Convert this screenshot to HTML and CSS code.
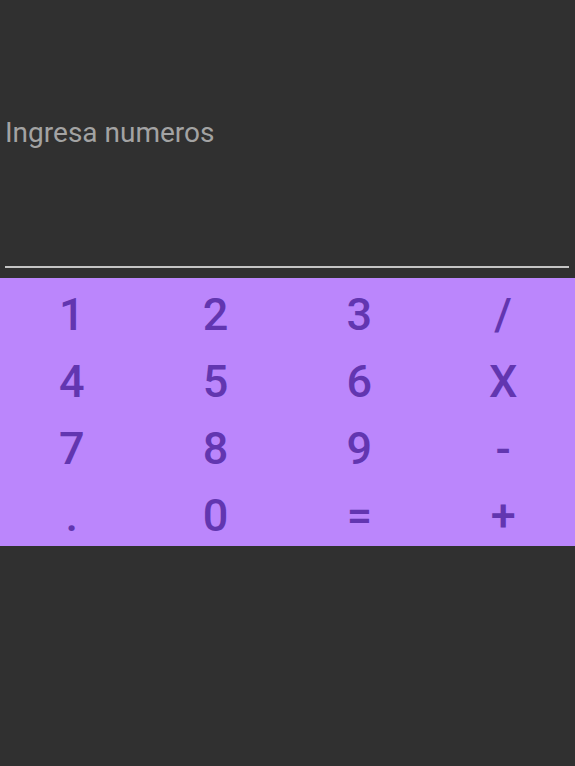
FILE: index.html
```html
<!DOCTYPE html>
<html lang="es">
<head>
<meta charset="utf-8">
<title>Calculadora</title>
<link rel="stylesheet" href="styles.css">
</head>
<body>
<main class="app">
  <section class="display">
    <div class="hint">Ingresa numeros</div>
    <div class="underline"></div>
  </section>
  <section class="keypad">
    <button class="key">1</button>
    <button class="key">2</button>
    <button class="key">3</button>
    <button class="key">/</button>
    <button class="key">4</button>
    <button class="key">5</button>
    <button class="key">6</button>
    <button class="key">X</button>
    <button class="key">7</button>
    <button class="key">8</button>
    <button class="key">9</button>
    <button class="key">-</button>
    <button class="key">.</button>
    <button class="key">0</button>
    <button class="key">=</button>
    <button class="key">+</button>
  </section>
</main>
</body>
</html>
```

FILE: styles.css
```css
html, body {
  margin: 0;
  padding: 0;
  background: #303030;
  height: 100%;
}

.app {
  font-family: Roboto, "Liberation Sans", sans-serif;
  width: 575px;
  height: 766px;
  background: #303030;
}

.display {
  height: 278px;
  padding: 0 6px 0 5px;
  box-sizing: border-box;
  display: flex;
  flex-direction: column;
}

.hint {
  margin-top: 116px;
  font-size: 28px;
  line-height: 34px;
  color: #a3a3a3;
  letter-spacing: 0;
}

.underline {
  margin-top: auto;
  margin-bottom: 10px;
  height: 2px;
  background: #c4c4c4;
}

.keypad {
  display: grid;
  grid-template-columns: repeat(4, 1fr);
  grid-auto-rows: 67px;
  background: #bb86fc;
}

.key {
  border: 0;
  margin: 0;
  background: transparent;
  font-family: Roboto, "Liberation Sans", sans-serif;
  font-weight: 500;
  font-size: 45px;
  line-height: 61px;
  padding: 6px 0 0 0;
  color: #6236b0;
  text-align: center;
}
```
